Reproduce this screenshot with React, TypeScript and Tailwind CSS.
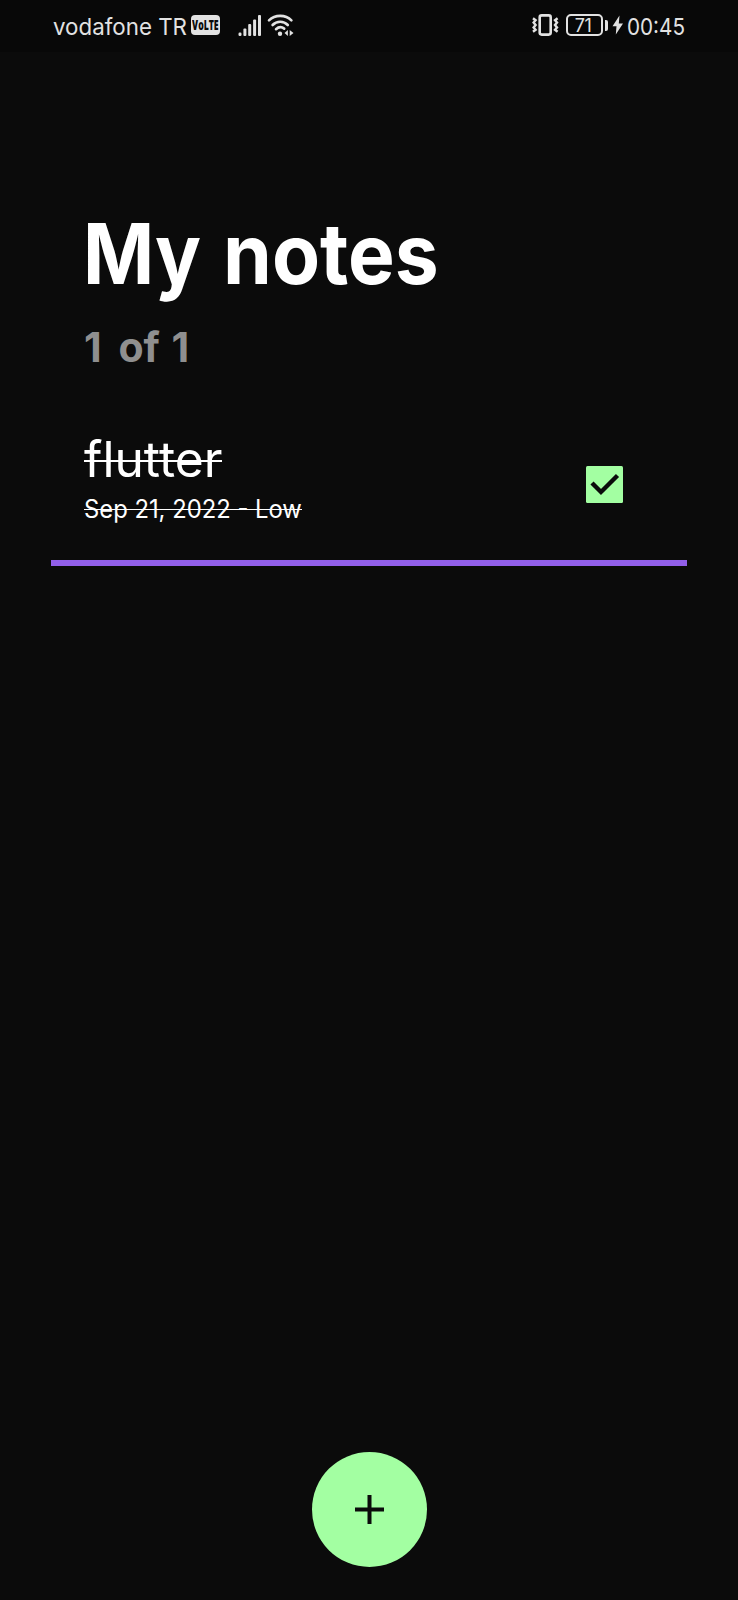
import React from "react";

function VolteBadge() {
  return (
    <span className="ml-[4px] flex h-[20px] w-[29px] shrink-0 items-center justify-center rounded-[4px] bg-[#e2e2e2]">
      <span className="origin-center scale-x-[0.62] font-['Open_Sans',sans-serif] text-[14px] leading-none font-extrabold text-[#0b0b0b]">
        VoLTE
      </span>
    </span>
  );
}

function SignalIcon() {
  return (
    <svg className="mb-[2px] ml-[18px] shrink-0" width="24" height="24" viewBox="0 0 24 24" fill="#e2e2e2">
      <rect x="0.500" y="19.500" width="3" height="3.500" rx="1.200" />
      <rect x="5.400" y="15.500" width="3" height="7.500" rx="1" />
      <rect x="10.200" y="11" width="3" height="12" rx="1" />
      <rect x="15.100" y="6.500" width="3" height="16.500" rx="1" />
      <rect x="20" y="2" width="3" height="21" rx="1" />
    </svg>
  );
}

function WifiIcon() {
  return (
    <svg className="mb-[2px] ml-[5px] shrink-0" width="28" height="24" viewBox="0 0 28 24" fill="none" stroke="#e2e2e2" strokeWidth="2.600" strokeLinecap="round">
      <path d="M2 7.400C8 1.400 18.500 1.400 24.400 7.400" />
      <path d="M5.600 12c4.200-4.400 11-4.400 15.200 0" />
      <path d="M9 16.200c2.600-2.400 5.800-2.400 8.200-.6" />
      <circle cx="13" cy="20.700" r="2.200" fill="#e2e2e2" stroke="none" />
      <path d="M20.900 17v6l-3.400-3zM22.700 17v6l3.800-3z" fill="#e2e2e2" stroke="none" />
    </svg>
  );
}

function VibrateIcon() {
  return (
    <svg className="mr-[2px] mb-[2px] shrink-0" width="27" height="22" viewBox="0 0 27 22" fill="none" stroke="#e2e2e2" strokeWidth="2.400">
      <rect x="7.700" y="1.400" width="11" height="19.200" rx="2" strokeWidth="2.600" />
      <path d="M1 4.200l2.600 2-2 2.400 2 2.400-2 2.400 2 2.400-2.600 2" />
      <path d="M25.600 4.200l-2.600 2 2 2.400-2 2.400 2 2.400-2 2.400 2.600 2" />
    </svg>
  );
}

function Battery() {
  return (
    <span className="mb-[2px] ml-[5px] flex shrink-0 items-center">
      <span className="flex h-[22px] w-[37px] items-center justify-center rounded-[5px] border-2 border-[#e2e2e2] text-[18px] leading-none tracking-[-0.5px]">
        <span className="-ml-[3px] pt-px">71</span>
      </span>
      <span className="ml-[2px] h-[11px] w-[3px] rounded-r-[2px] bg-[#e2e2e2]" />
    </span>
  );
}

function StatusBar() {
  return (
    <header className="flex h-[52px] items-center bg-[#080808] pr-[53px] pl-[53px] text-[23.5px] text-[#e2e2e2]">
      <span className="w-[134px] shrink-0 pt-px whitespace-nowrap">
        <span className="inline-block origin-left scale-x-[0.95]">vodafone TR</span>
      </span>
      <span className="mb-[2px] flex">
        <VolteBadge />
      </span>
      <SignalIcon />
      <WifiIcon />
      <span className="grow" />
      <VibrateIcon />
      <Battery />
      <svg className="mb-[2px] ml-[4px] shrink-0" width="12" height="20" viewBox="0 0 12 20" fill="#e2e2e2">
        <path d="M7.500 0.500L0.500 11.200h4L3.800 19.500 11 8.500H6.800z" />
      </svg>
      <span className="ml-[3px] w-[58px] shrink-0 pt-px whitespace-nowrap">
        <span className="inline-block origin-left scale-x-[0.88]">00:45</span>
      </span>
    </header>
  );
}

export default function App() {
  return (
    <div className="flex h-[1600px] w-[738px] flex-col bg-[#0b0b0b] font-['Inter',sans-serif] text-white">
      <StatusBar />
      <main className="grow px-[51px] pt-[152px]">
        <h1 className="flex pl-[32px] text-[84px] leading-[100px] font-bold whitespace-nowrap">
          <span className="w-[140px] origin-left scale-x-[0.91]">My </span>
          <span className="origin-left scale-x-[0.935]">notes</span>
        </h1>
        <p className="mt-[18px] pl-[33px] text-[41px] leading-[50px] font-bold whitespace-nowrap text-[#8f8f8f]">
          <span className="mr-[7px]">1</span> of <span className="ml-[2px]">1</span>
        </p>
        <section className="mt-[59px] flex items-center justify-between border-b-[6px] border-[#925fe9] pr-[64px] pb-[35px] pl-[33px]">
          <div className="whitespace-nowrap">
            <div className="relative w-[138px] pt-px text-[49px] leading-[56px]">
              <span className="inline-block origin-left scale-x-[1.015]">flutter</span>
              <span className="absolute inset-x-0 top-[29px] h-[2px] bg-white" />
            </div>
            <div className="relative mt-[5px] w-[218px] text-[25px] leading-[32px]">
              <span className="inline-block origin-left scale-x-[0.952]">Sep 21, 2022 - Low</span>
              <span className="absolute inset-x-0 top-[16px] h-px bg-white" />
            </div>
          </div>
          <svg className="mt-[13px]" width="37" height="37" viewBox="0 0 37 37">
            <rect width="37" height="37" rx="1.500" fill="#a3ffa2" />
            <path d="M6 17l9 9L31.500 9.500" fill="none" stroke="#0b0b0b" strokeWidth="4.400" />
          </svg>
        </section>
      </main>
      <footer className="flex justify-center pb-[33px]">
        <button className="flex size-[115px] items-center justify-center rounded-full bg-[#a3ffa2]">
          <svg width="29" height="29" viewBox="0 0 29 29" fill="#0b0b0b">
            <path d="M12.500 0h4v12.500H29v4H16.500V29h-4V16.500H0v-4h12.500z" />
          </svg>
        </button>
      </footer>
    </div>
  );
}
